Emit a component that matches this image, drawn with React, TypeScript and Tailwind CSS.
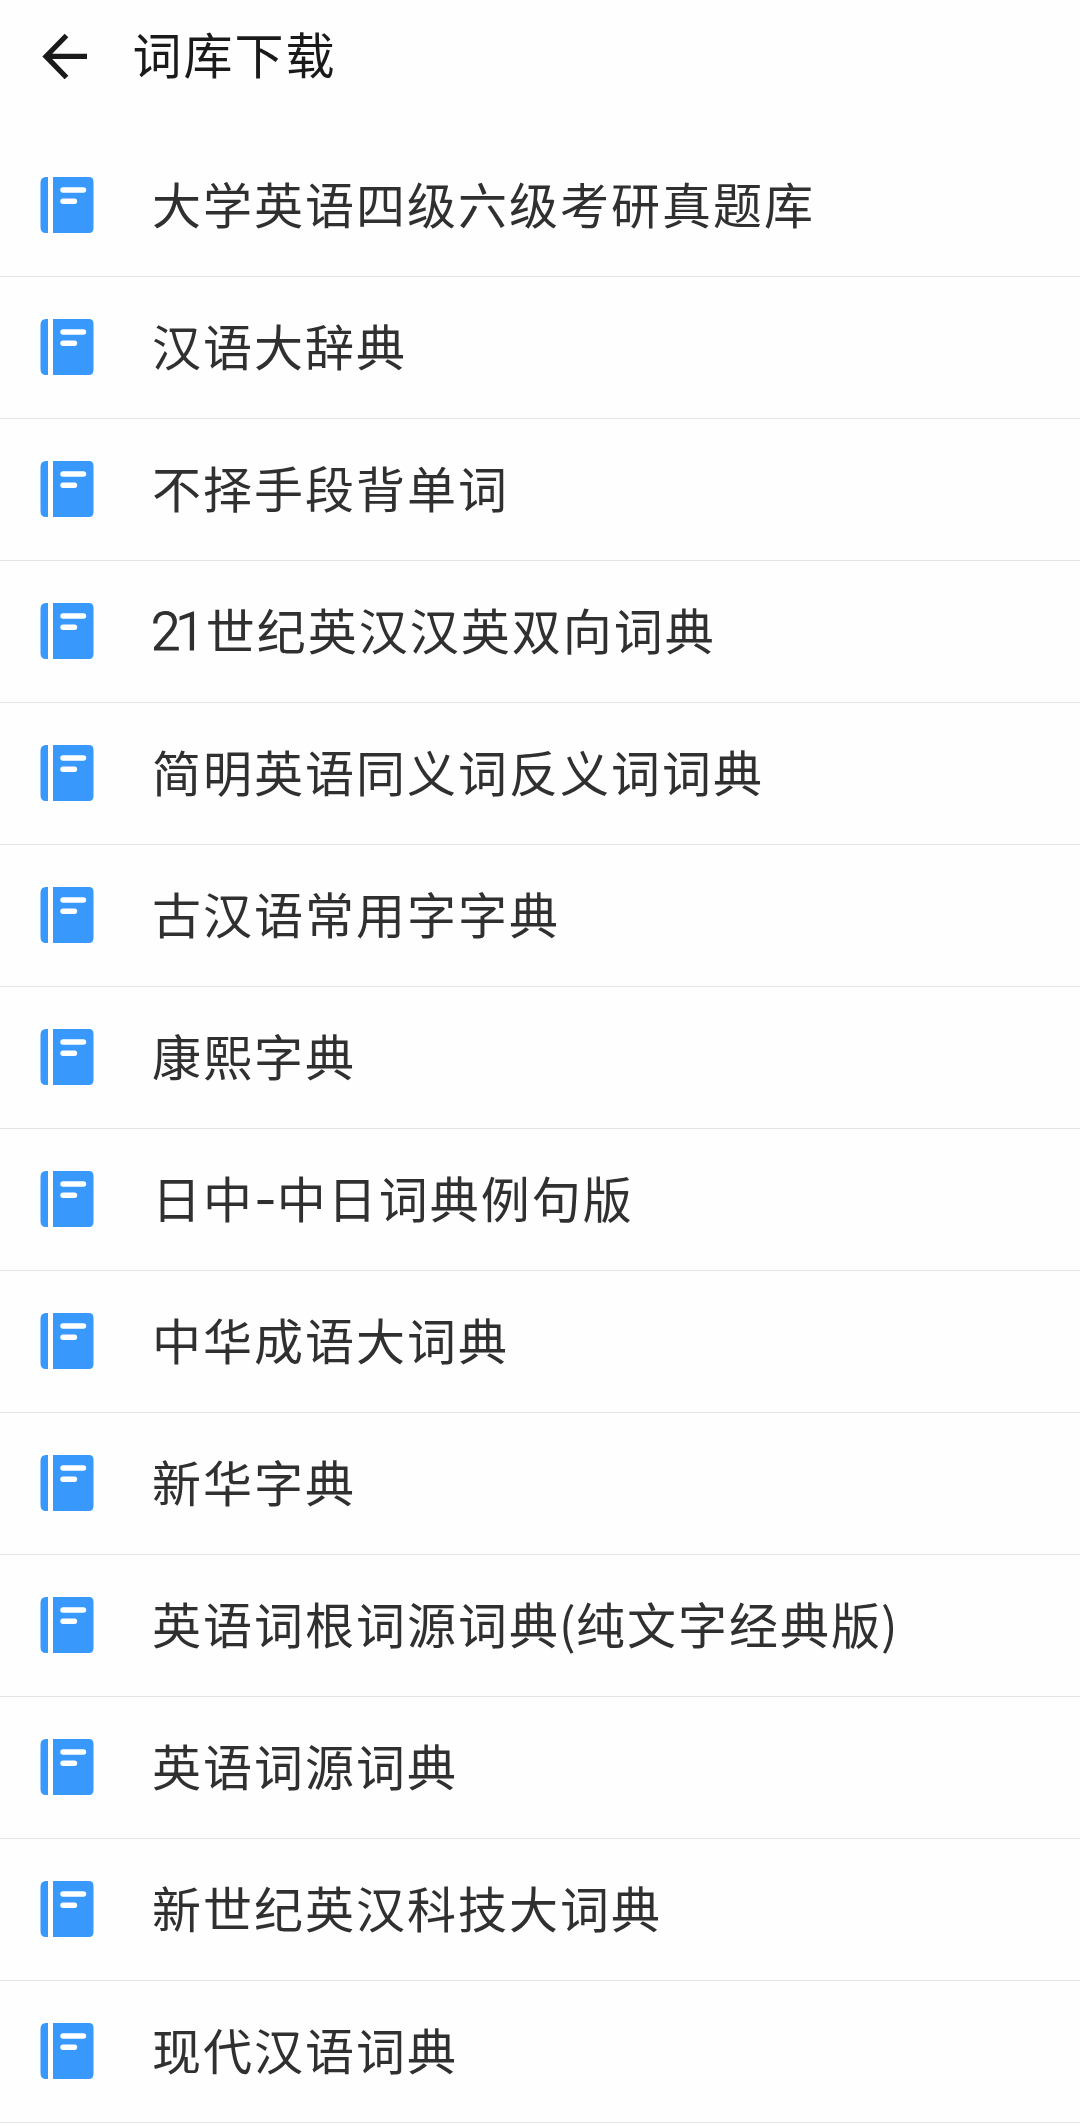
const items = [
  '大学英语四级六级考研真题库', '汉语大辞典', '不择手段背单词', '21世纪英汉汉英双向词典',
  '简明英语同义词反义词词典', '古汉语常用字字典', '康熙字典', '日中-中日词典例句版',
  '中华成语大词典', '新华字典', '英语词根词源词典(纯文字经典版)', '英语词源词典',
  '新世纪英汉科技大词典', '现代汉语词典',
];

function Book() {
  return (
    <svg className="-mt-px h-[56px] w-[54px] shrink-0" viewBox="0 0 54 56" fill="none">
      <path d="M8 0H6Q.5 0 .5 6V50Q.5 56 6 56H8Z" fill="#3898fc" />
      <path d="M13 0H49Q53.5 0 53.5 5V51Q53.5 56 49 56H13Z" fill="#3898fc" />
      <path d="M23 13H43.5M23 24.3H34.5" stroke="#fff" strokeWidth="5.4" strokeLinecap="round" />
    </svg>
  );
}

function Label({ text }: { text: string }) {
  return text.split(/(\d+|[-()])/).map((part, i) => {
    if (/^\d+$/.test(part)) {
      return <span key={i} className="-ml-px mr-[6px] font-[Roboto] text-[53px] leading-none font-light tracking-[-5px] [-webkit-text-stroke:1.2px_#303030]">{part}</span>;
    }
    if (part === '-') {
      return <span key={i} className="font-[Inter] text-[50px] leading-none tracking-[-0.4px]">{part}</span>;
    }
    if (part === '(' || part === ')') {
      return <span key={i} className="-ml-px tracking-[0.5px]">{part}</span>;
    }
    return part;
  });
}

export default function App() {
  return (
    <main className="h-[2126px] w-[1080px] overflow-hidden bg-[#fefefe] font-['Noto_Sans_CJK_SC',sans-serif] text-[#303030]">
      <header className="flex h-[135px] items-start pl-[42px]">
        <svg className="mt-[33px] h-[46px] w-[46px]" viewBox="0 0 46 46" fill="none" stroke="#1a1a1a" strokeWidth="5.2">
          <path d="M45 23.4H4M24.5 2.5L4 23.4L24.5 44.5" />
        </svg>
        <h1 className="ml-[44.5px] mt-[17px] text-[49px] leading-[72px] tracking-[2px] text-[#1a1a1a]">词库下载</h1>
      </header>
      <ul>
        {items.map((item) => (
          <li key={item} className="flex h-[142px] items-center border-b border-[#e4e4e4] pl-[40px]">
            <Book />
            <span className="-mt-[6px] ml-[58px] h-[72px] whitespace-nowrap text-[49px] leading-[72px] tracking-[2px]">
              <Label text={item} />
            </span>
          </li>
        ))}
      </ul>
    </main>
  );
}
